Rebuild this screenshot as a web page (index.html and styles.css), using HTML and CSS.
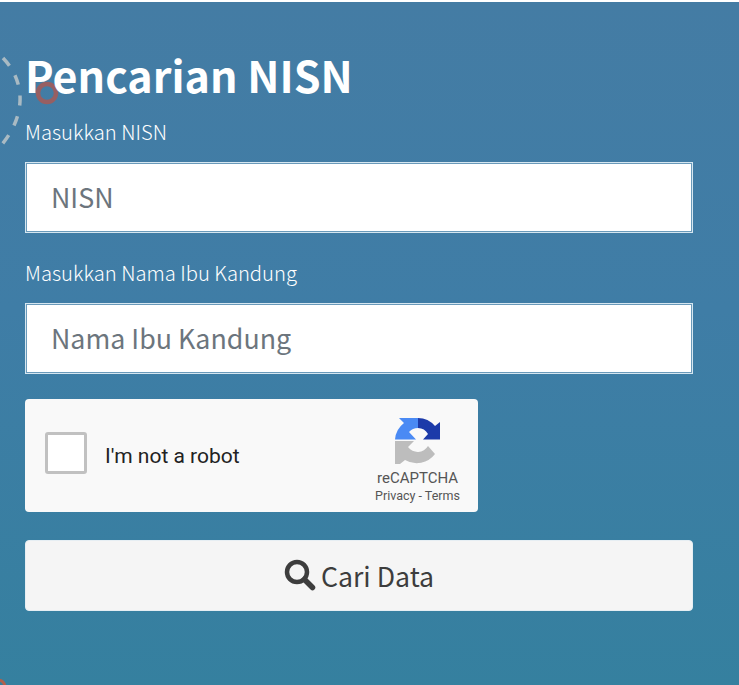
FILE: index.html
```html
<!DOCTYPE html>
<html lang="id">
<head>
  <meta charset="UTF-8">
  <meta name="viewport" content="width=device-width, initial-scale=1.0">
  <title>Pencarian NISN</title>
  <link rel="stylesheet" href="styles.css">
</head>
<body>
  <div class="panel">
    <!-- hiasan latar -->
    <svg class="deco" width="60" height="170" viewBox="0 0 60 170">
      <path d="M3 58 C 28 84, 26 122, -6 153" fill="none" stroke="#a9bac3" stroke-width="3.5" stroke-dasharray="10 11"/>
      <circle cx="47" cy="93" r="9" fill="none" stroke="#975f62" stroke-width="4.5"/>
    </svg>
    <svg class="deco_corner" width="10" height="8" viewBox="0 0 10 8">
      <circle cx="-2" cy="10" r="7" fill="none" stroke="#b0604c" stroke-width="3"/>
    </svg>

    <form class="search_form">
      <h1>Pencarian NISN</h1>
      <label for="nisn">Masukkan NISN</label>
      <input type="text" id="nisn" placeholder="NISN">
      <label for="ibu" class="second">Masukkan Nama Ibu Kandung</label>
      <input type="text" id="ibu" placeholder="Nama Ibu Kandung">

      <div class="captcha">
        <span class="check"></span>
        <span class="robot">I'm not a robot</span>
        <div class="brand">
          <svg class="logo" width="46" height="46" viewBox="0 0 46 46">
            <path d="M23 0 V10 A12 12 0 0 0 14 14 L21 21.5 H0 A23 23 0 0 1 9 5 L4 0 Z" fill="#4a8af4"/>
            <path d="M23 0 A23 23 0 0 1 40 8 L45 4 V21.5 H28 L33 16 A12 12 0 0 0 23 10 Z" fill="#1c3aa9"/>
            <path d="M0 23 H19 L13 29 A12 12 0 0 0 33 28 L40 36 A23 23 0 0 1 10 42 L5 46 H0 Z" fill="#bdbdbd"/>
          </svg>
          <span class="brand_name">reCAPTCHA</span>
          <span class="brand_links">Privacy - Terms</span>
        </div>
      </div>

      <button type="button" class="btn_search">
        <svg width="32" height="32" viewBox="0 0 32 32">
          <circle cx="13" cy="13" r="10" fill="none" stroke="#3d3d3d" stroke-width="4.5"/>
          <path d="M20.5 20.5 L28.5 28.5" stroke="#3d3d3d" stroke-width="5.5" stroke-linecap="round"/>
        </svg>
        Cari Data
      </button>
    </form>
  </div>
</body>
</html>
```

FILE: styles.css
```css
* {
  box-sizing: border-box;
  font-family: "Noto Sans CJK SC", "Noto Sans", sans-serif;
}

body {
  margin: 0;
  background: #fff;
}

.panel {
  position: relative;
  overflow: hidden;
  height: 685px;
  margin-top: 2px;
  padding: 45px 46px 0 25px;
  background: linear-gradient(180deg, #447ca4 0%, #3f7da6 45%, #35809f 100%);
}

.deco {
  position: absolute;
  top: -2px;
  left: 0;
}

.deco_corner {
  position: absolute;
  bottom: 2px;
  left: 0;
}

.search_form {
  position: relative;
  display: flex;
  flex-direction: column;
  align-items: flex-start;
}

h1 {
  margin: 0;
  color: #fff;
  font-size: 43px;
  font-weight: 700;
  line-height: 54px;
}

label {
  margin-top: 17px;
  color: #fff;
  font-size: 20.2px;
  font-weight: 300;
  line-height: 27px;
}

label.second {
  margin-top: 26px;
}

input {
  width: 100%;
  height: 71px;
  margin-top: 17px;
  padding: 0 25px 2px;
  border: 1px solid #d5e6f0;
  box-shadow: inset 0 0 0 1px #6a9aba;
  background: #fff;
  color: #333;
  font-size: 26.8px;
}

input::placeholder {
  color: #6c757d;
  opacity: 1;
}

.captcha {
  display: flex;
  align-items: center;
  width: 453px;
  height: 113px;
  margin-top: 25px;
  padding: 0 18px 0 20px;
  border-radius: 4px;
  background: #f9f9f9;
}

.check {
  width: 42px;
  height: 42px;
  margin-bottom: 6px;
  border: 3px solid #c1c1c1;
  border-radius: 3px;
  background: #fff;
}

.robot {
  margin-left: 18px;
  color: #222;
  font-family: Roboto, sans-serif;
  font-size: 21px;
}

.brand {
  display: flex;
  flex-direction: column;
  align-items: center;
  margin-left: auto;
  padding-top: 10px;
  color: #555;
}

.logo {
  margin-bottom: 4px;
}

.brand_name {
  font-family: Roboto, sans-serif;
  font-size: 15px;
  line-height: 20px;
}

.brand_links {
  font-family: Roboto, sans-serif;
  font-size: 12.5px;
  line-height: 16px;
}

.btn_search {
  display: flex;
  justify-content: center;
  align-items: center;
  gap: 5px;
  width: 100%;
  height: 71px;
  margin-top: 28px;
  padding-bottom: 2px;
  border: 1px solid #e6eef3;
  border-radius: 4px;
  background: #f5f5f5;
  color: #3d3d3d;
  font-size: 26.7px;
  cursor: pointer;
}
```
